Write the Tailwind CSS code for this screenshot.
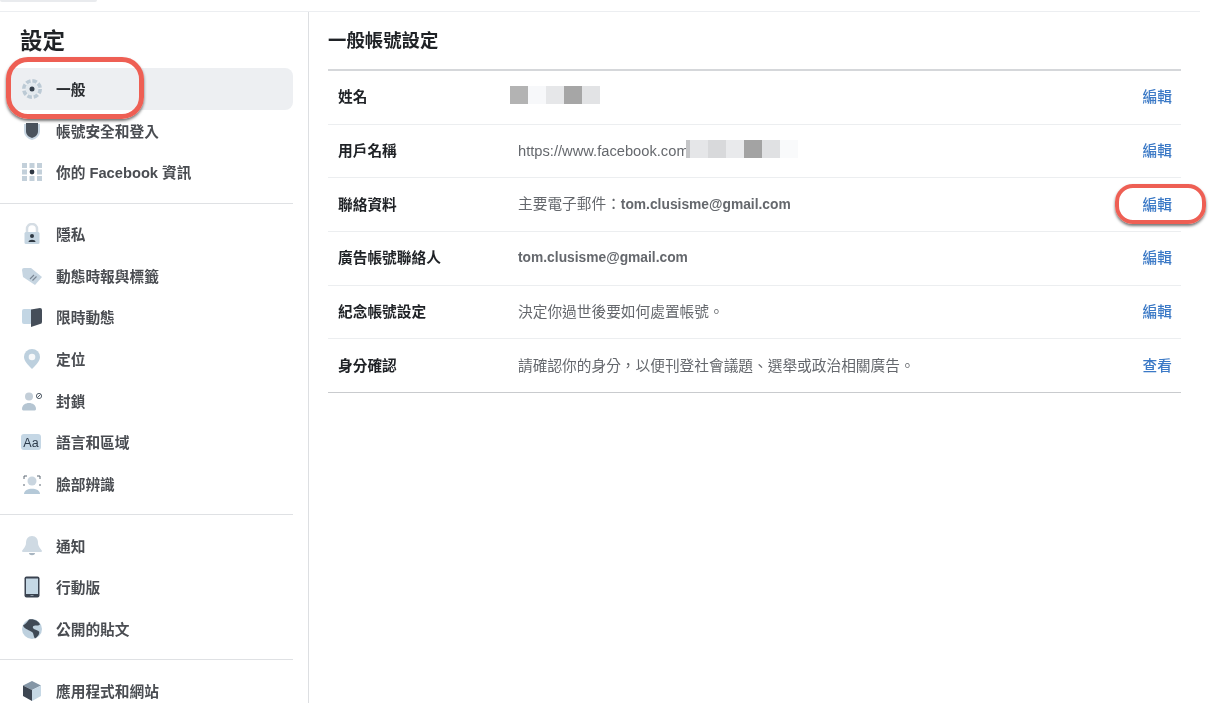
<!DOCTYPE html>
<html lang="zh-Hant">
<head>
<meta charset="utf-8">
<script src="https://cdn.jsdelivr.net/npm/@tailwindcss/browser@4"></script>
<title>設定</title>
</head>
<body class="bg-white">
<div class="relative w-[1210px] h-[703px] overflow-hidden bg-white text-[#1f2226] blur-[0.3px] font-['Liberation_Sans','Noto_Sans_CJK_TC',sans-serif]">
  <div class="h-[12px] w-[1200px] bg-white border-b border-[#eceef1] relative">
    <div class="absolute left-0 top-0 w-[97px] h-[2px] bg-[#e9ebee] rounded-b-full"></div>
  </div>
  <div class="flex h-[691px]">
    <aside class="w-[309px] shrink-0 border-r border-[#dddfe2] pr-[15px] overflow-hidden">
      <h1 class="pl-[20px] pt-[15px] h-[56px] text-[22.5px] leading-[30px] font-bold">設定</h1>
      <nav class="text-[14.7px] font-semibold text-[#4a4d52] [&_span]:pt-[2px]">
        <div class="flex items-center h-[42px] ml-[8px] pl-[13px] rounded-[8px] bg-[#edeff2]">
          <svg class="w-[22px] h-[22px] mr-[13px] blur-[0.5px]" viewBox="0 0 22 22"><circle cx="11" cy="11" r="8" fill="none" stroke="#bccad5" stroke-width="4" stroke-dasharray="4.500 1.800"/><circle cx="11" cy="11" r="6.500" fill="#e3e9ee"/><circle cx="11" cy="11" r="2.500" fill="#36404c"/></svg>
          <span class="text-[#2a2d31]">一般</span>
        </div>
        <div class="flex items-center h-[41.67px] pl-[21px]">
          <svg class="w-[22px] h-[22px] mr-[13px] blur-[0.4px]" viewBox="0 0 22 22"><path d="M3 4h16v7c0 5-4 8-8 9-4-1-8-4-8-9z" fill="#c8d6e2"/><path d="M5 3h12v8c0 4-3 6-6 7-3-1-6-3-6-7z" fill="#4a525c"/></svg>
          <span>帳號安全和登入</span>
        </div>
        <div class="flex items-center h-[41.67px] pl-[21px]">
          <svg class="w-[22px] h-[22px] mr-[13px] blur-[0.4px]" viewBox="0 0 22 22"><g fill="#c3d0da"><rect x="1" y="2" width="5" height="5"/><rect x="8.500" y="2" width="5" height="5"/><rect x="16" y="2" width="5" height="5"/><rect x="1" y="8.500" width="5" height="5"/><rect x="16" y="8.500" width="5" height="5"/><rect x="1" y="15" width="5" height="5"/><rect x="8.500" y="15" width="5" height="5"/><rect x="16" y="15" width="5" height="5"/></g><circle cx="11" cy="11" r="2.400" fill="#2f3843"/></svg>
          <span>你的 Facebook 資訊</span>
        </div>
        <div class="h-px bg-[#dfe1e4] my-[9.5px]"></div>
        <div class="flex items-center h-[41.67px] pl-[21px]">
          <svg class="w-[22px] h-[22px] mr-[13px] blur-[0.4px]" viewBox="0 0 22 22"><path d="M6 10V6a5 5 0 0 1 10 0v4" fill="none" stroke="#d5dde4" stroke-width="2.500"/><rect x="3.500" y="9" width="15" height="12" rx="1.500" fill="#c5d5e1"/><circle cx="11" cy="13" r="2" fill="#2f3843"/><path d="M7.500 19c0-3 7-3 7 0z" fill="#2f3843"/></svg>
          <span>隱私</span>
        </div>
        <div class="flex items-center h-[41.67px] pl-[21px]">
          <svg class="w-[22px] h-[22px] mr-[13px] blur-[0.4px]" viewBox="0 0 22 22"><path d="M1 5q0-2 2-2l7 0 11 9-7 8L2 12z" fill="#c6d5e1"/><path d="M9 14l4-4M11.500 15.500l4-4" stroke="#7a8693" stroke-width="1.100"/></svg>
          <span>動態時報與標籤</span>
        </div>
        <div class="flex items-center h-[41.67px] pl-[21px]">
          <svg class="w-[22px] h-[22px] mr-[13px] blur-[0.4px]" viewBox="0 0 22 22"><rect x="1" y="3" width="10" height="15" rx="2" fill="#c3d6e4"/><path d="M10 3.500L19 2a2 2 0 0 1 2 2v12a2 2 0 0 1-2 2l-9 3z" fill="#454e59"/></svg>
          <span>限時動態</span>
        </div>
        <div class="flex items-center h-[41.67px] pl-[21px]">
          <svg class="w-[22px] h-[22px] mr-[13px] blur-[0.4px]" viewBox="0 0 22 22"><path d="M11 21C7 17 3 13 3 9a8 8 0 0 1 16 0c0 4-4 8-8 12z" fill="#bdd0de"/><circle cx="11" cy="9" r="3.300" fill="#f6f8fa"/></svg>
          <span>定位</span>
        </div>
        <div class="flex items-center h-[41.67px] pl-[21px]">
          <svg class="w-[22px] h-[22px] mr-[13px] blur-[0.3px]" viewBox="0 0 22 22"><circle cx="8" cy="6.500" r="4" fill="#c3ced8"/><path d="M1 19c0-8 14-8 14 0 0 1-1 1.500-2 1.500H3c-1 0-2-.5-2-1.500z" fill="#b5c5d2"/><circle cx="18" cy="6" r="2.600" fill="none" stroke="#59636e" stroke-width="1"/><path d="M16.200 7.800l3.600-3.600" stroke="#59636e" stroke-width="1"/></svg>
          <span>封鎖</span>
        </div>
        <div class="flex items-center h-[41.67px] pl-[21px]">
          <div class="w-[20px] h-[16px] mr-[15px] rounded-[3px] bg-[#c5d7e5] flex items-center justify-center text-[12.5px] leading-none font-normal text-[#2b3a4a] pt-[1px]">Aa</div>
          <span>語言和區域</span>
        </div>
        <div class="flex items-center h-[41.67px] pl-[21px]">
          <svg class="w-[22px] h-[22px] mr-[13px] blur-[0.4px]" viewBox="0 0 22 22"><path d="M3 6V3h3M16 3h3v3M3 11v2M19 11v2" fill="none" stroke="#5d6874" stroke-width="1"/><circle cx="11" cy="8" r="4.500" fill="#c9d5df"/><path d="M3 21c0-7 16-7 16 0z" fill="#b5c9d8"/></svg>
          <span>臉部辨識</span>
        </div>
        <div class="h-px bg-[#dfe1e4] my-[9.5px]"></div>
        <div class="flex items-center h-[41.67px] pl-[21px]">
          <svg class="w-[22px] h-[22px] mr-[13px] blur-[0.4px]" viewBox="0 0 22 22"><path d="M11 1c4 0 6 3 6 7 0 4 4 7 4 8s-1 1-3 1H4c-2 0-3 0-3-1s4-4 4-8c0-4 2-7 6-7z" fill="#cfdae3"/><path d="M8 18h6c0 3-6 3-6 0z" fill="#a8b5c1"/></svg>
          <span>通知</span>
        </div>
        <div class="flex items-center h-[41.67px] pl-[21px]">
          <svg class="w-[22px] h-[22px] mr-[13px] blur-[0.3px]" viewBox="0 0 22 22"><rect x="3.500" y="0.500" width="15" height="21" rx="2" fill="#3a4350"/><rect x="5" y="2.500" width="12" height="15.500" fill="#c5d8e5"/><rect x="9.500" y="19" width="3" height="1" fill="#8c96a1"/></svg>
          <span>行動版</span>
        </div>
        <div class="flex items-center h-[41.67px] pl-[21px]">
          <svg class="w-[22px] h-[22px] mr-[13px] blur-[0.4px]" viewBox="0 0 22 22"><circle cx="11" cy="11" r="10" fill="#bdd0de"/><path d="M8 1.500c5-1 10 2 11 5-2 2-6 0-7 2-1 3 3 3 6 5 1 2-1 5-4 7-2-3-1-6-4-7-3-2-7-3-8-6 2-1 4-3 6-6z" fill="#3f4955"/></svg>
          <span>公開的貼文</span>
        </div>
        <div class="h-px bg-[#dfe1e4] my-[9.5px]"></div>
        <div class="flex items-center h-[41.67px] pl-[21px]">
          <svg class="w-[22px] h-[22px] mr-[13px] blur-[0.4px]" viewBox="0 0 22 22"><path d="M11 1l9 4.500-9 4.500-9-4.500z" fill="#8496a6"/><path d="M2 5.500l9 4.500v11l-9-5z" fill="#3d4652"/><path d="M20 5.500L11 10v11l9-5z" fill="#c6d8e5"/></svg>
          <span>應用程式和網站</span>
        </div>
      </nav>
    </aside>
    <main class="w-[853px] ml-[19px]">
      <h2 class="h-[57px] pt-[16px] text-[18.4px] leading-[26px] font-bold">一般帳號設定</h2>
      <div class="border-t-2 border-[#d5d7da] text-[14.7px]">
        <div class="flex items-center h-[53.7px] border-b border-[#eceef0]">
          <div class="w-[182px] pl-[10px] font-semibold shrink-0">姓名</div>
          <div class="flex-1 flex pb-[5px]">
            <i class="w-[18px] h-[18px] bg-[#b3b3b3]"></i><i class="w-[18px] h-[18px] bg-[#f7f8fa]"></i><i class="w-[18px] h-[18px] bg-[#e6e7e9]"></i><i class="w-[18px] h-[18px] bg-[#a6a6a6]"></i><i class="w-[18px] h-[18px] bg-[#e2e3e5]"></i>
          </div>
          <a class="pr-[9px] text-[#3b79c6] font-medium">編輯</a>
        </div>
        <div class="flex items-center h-[53.7px] border-b border-[#eceef0]">
          <div class="w-[190px] pl-[10px] font-semibold shrink-0">用戶名稱</div>
          <div class="flex-1 flex items-center text-[#65686d]">
            <span>https://www.facebook.com</span>
            <span class="flex -ml-[3px] mb-[5px]">
              <i class="w-[4px] h-[18px] bg-[#c4c5c7]"></i><i class="w-[18px] h-[18px] bg-[#e5e6e8]"></i><i class="w-[18px] h-[18px] bg-[#d8d9db]"></i><i class="w-[18px] h-[18px] bg-[#e9eaec]"></i><i class="w-[18px] h-[18px] bg-[#a3a3a3]"></i><i class="w-[18px] h-[18px] bg-[#e0e1e3]"></i><i class="w-[18px] h-[18px] bg-[#f9fafb]"></i>
            </span>
          </div>
          <a class="pr-[9px] text-[#3b79c6] font-medium">編輯</a>
        </div>
        <div class="flex items-center h-[53.7px] border-b border-[#eceef0]">
          <div class="w-[190px] pl-[10px] font-semibold shrink-0">聯絡資料</div>
          <div class="flex-1 text-[#65686d]">主要電子郵件：<b class="text-[13.8px]">tom.clusisme@gmail.com</b></div>
          <a class="pr-[9px] text-[#3b79c6] font-medium">編輯</a>
        </div>
        <div class="flex items-center h-[53.7px] border-b border-[#eceef0]">
          <div class="w-[190px] pl-[10px] font-semibold shrink-0">廣告帳號聯絡人</div>
          <div class="flex-1 text-[#65686d] text-[13.8px] font-bold">tom.clusisme@gmail.com</div>
          <a class="pr-[9px] text-[#3b79c6] font-medium">編輯</a>
        </div>
        <div class="flex items-center h-[53.7px] border-b border-[#eceef0]">
          <div class="w-[190px] pl-[10px] font-semibold shrink-0">紀念帳號設定</div>
          <div class="flex-1 text-[#65686d]">決定你過世後要如何處置帳號。</div>
          <a class="pr-[9px] text-[#3b79c6] font-medium">編輯</a>
        </div>
        <div class="flex items-center h-[53.7px] border-b border-[#c9cbce]">
          <div class="w-[190px] pl-[10px] font-semibold shrink-0">身分確認</div>
          <div class="flex-1 text-[#65686d]">請確認你的身分，以便刊登社會議題、選舉或政治相關廣告。</div>
          <a class="pr-[9px] text-[#3b79c6] font-medium">查看</a>
        </div>
      </div>
    </main>
  </div>
  <div class="absolute left-[6px] top-[57px] w-[138px] h-[62px] rounded-[22px] border-[5px] border-[#ee5f54] shadow-[0_2px_3px_rgba(0,0,0,0.55)]"></div>
  <div class="absolute left-[1115px] top-[184px] w-[91px] h-[40px] rounded-[18px] border-[4px] border-[#ee5f54] shadow-[0_2px_3px_rgba(0,0,0,0.55)]"></div>
</div>
</body>
</html>
